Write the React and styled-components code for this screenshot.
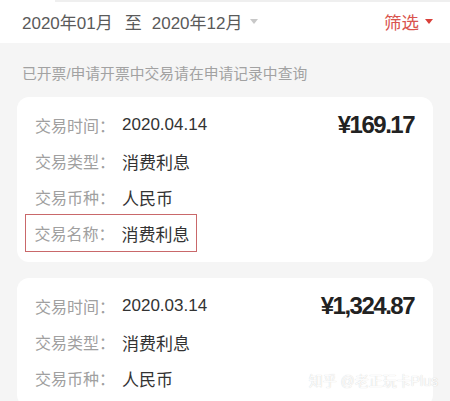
import React from 'react';
import styled, { createGlobalStyle } from 'styled-components';

const GlobalStyle = createGlobalStyle`
  html, body {
    margin: 0;
    padding: 0;
    background: #f5f5f5;
    overflow: hidden;
  }
  body {
    font-family: "Liberation Sans", "Noto Sans CJK SC", sans-serif;
  }
`

const Page = styled.div`
  position: relative;
  width: 450px;
  height: 401px;
  overflow: hidden;
  background: #f5f5f5;
`

const Header = styled.div`
  position: relative;
  height: 43px;
  background: #fff;
  display: flex;
  align-items: center;
  justify-content: space-between;
  padding: 0 17px 0 22px;
`

const TopLine = styled.div`
  position: absolute;
  top: 0;
  left: 55px;
  right: 0;
  height: 2px;
  background: #efefef;
`

const Range = styled.div`
  display: flex;
  align-items: center;
  font-size: 17px;
  color: #5a5a5a;
`

const To = styled.span`
  margin: 0 10px 0 12px;
`

const Triangle = styled.span`
  display: inline-block;
  width: 0;
  height: 0;
  border-left: ${p => p.$w / 2}px solid transparent;
  border-right: ${p => p.$w / 2}px solid transparent;
  border-top: ${p => p.$h}px solid ${p => p.$color};
  margin-left: ${p => p.$gap}px;
`

const Filter = styled.div`
  display: flex;
  align-items: center;
  font-size: 17.5px;
  color: #d9544e;
`

const Notice = styled.div`
  padding: 21px 22px 11px;
  font-size: 14.8px;
  line-height: 20px;
  color: #a2a2a2;
`

const List = styled.div`
  display: flex;
  flex-direction: column;
  gap: 16px;
  padding: 2px 17px 0;
`

const Card = styled.div`
  background: #fff;
  border-radius: 12px;
  padding: 10px 18px 11px;
  display: flex;
  align-items: flex-start;
`

const Rows = styled.div`
  flex: 1;
  display: flex;
  flex-direction: column;
  align-items: flex-start;
`

const Row = styled.div`
  display: flex;
  align-items: center;
  height: 36px;
  ${p => p.$marked && `
    margin: -1px 0 -1px -10px;
    padding: 0 6px 0 8.5px;
    border: 1.5px solid #c9686a;
  `}
`

const Label = styled.span`
  font-size: 16px;
  color: #a0a0a0;
  margin-right: 7px;
`

const Value = styled.span`
  font-size: 17px;
  color: #333;
`

const Amount = styled.div`
  height: 36px;
  display: flex;
  align-items: center;
  font-size: 24px;
  font-weight: bold;
  letter-spacing: -1.5px;
  color: #222;
  padding-right: 1px;
`

const Watermark = styled.div`
  position: absolute;
  right: 12px;
  top: 370px;
  font-size: 14px;
  color: rgba(255, 255, 255, 0.95);
  text-shadow: 0 0 1px rgba(0, 0, 0, 0.22);
`

const records = [
  {
    amount: '¥169.17',
    rows: [
      ['交易时间：', '2020.04.14'],
      ['交易类型：', '消费利息'],
      ['交易币种：', '人民币'],
      ['交易名称：', '消费利息', true],
    ],
  },
  {
    amount: '¥1,324.87',
    rows: [
      ['交易时间：', '2020.03.14'],
      ['交易类型：', '消费利息'],
      ['交易币种：', '人民币'],
    ],
  },
]

const App = () => {
  return (
    <Page>
      <GlobalStyle />
      <Header>
        <TopLine />
        <Range>
          <span>2020年01月</span>
          <To>至</To>
          <span>2020年12月</span>
          <Triangle $w={9} $h={5} $color="#c8c8c8" $gap={8} />
        </Range>
        <Filter>
          筛选
          <Triangle $w={9} $h={5} $color="#d9403a" $gap={6} />
        </Filter>
      </Header>
      <Notice>已开票/申请开票中交易请在申请记录中查询</Notice>
      <List>
        {records.map((r, i) => (
          <Card key={i}>
            <Rows>
              {r.rows.map(([label, value, marked]) => (
                <Row key={label} $marked={marked}>
                  <Label>{label}</Label>
                  <Value>{value}</Value>
                </Row>
              ))}
            </Rows>
            <Amount>{r.amount}</Amount>
          </Card>
        ))}
      </List>
      <Watermark>知乎 @老正玩卡Plus</Watermark>
    </Page>
  )
}

export default App
